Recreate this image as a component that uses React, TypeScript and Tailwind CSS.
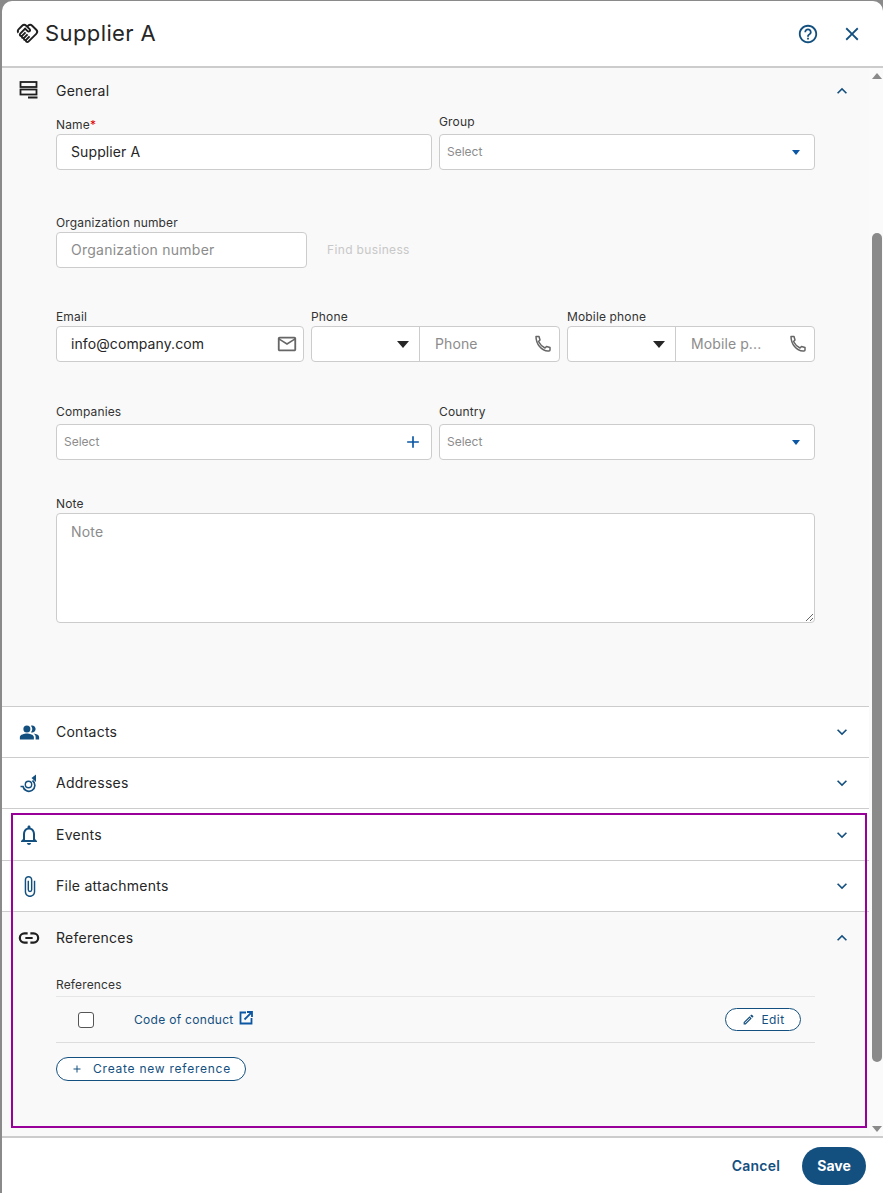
import { MdAdd, MdAttachFile, MdClose, MdExpandLess, MdExpandMore, MdHelpOutline, MdOutlineEdit, MdOutlineEmail, MdOutlineHandshake, MdOutlineNotifications, MdPeopleAlt } from 'react-icons/md'

const labelClass = 'block h-4 text-xs leading-4 tracking-[0.15px] text-[#333]'
const boxClass = 'h-9 rounded border border-[#ccc] bg-white'

function StackIcon() {
  return (
    <svg viewBox="0 0 20 20" className="size-5 text-[#1f1f1f]" fill="none" stroke="currentColor" strokeWidth="1.8">
      <rect x="1.500" y="1" width="16" height="5" />
      <rect x="1.500" y="8.500" width="16" height="5" />
      <path d="M9 16.500h9.500" strokeWidth="2" />
    </svg>
  )
}

function HornIcon() {
  return (
    <svg viewBox="0 0 20 20" className="size-5 text-[#14507f]" fill="none" stroke="currentColor" strokeWidth="1.700">
      <path d="M1.500 13.500H4a6 6 0 1 0 9.500-6" />
      <circle cx="9.500" cy="11.500" r="3.200" strokeWidth="1.400" />
      <path d="M12.500 5 17 1.500V9Z" fill="currentColor" stroke="none" />
    </svg>
  )
}

function PhoneIcon() {
  return (
    <svg viewBox="0 0 20 20" className="size-5 text-[#666]" fill="none" stroke="currentColor" strokeWidth="1.500" strokeLinejoin="round">
      <path d="M3 2.500h3l1 3.500-1.500 1.500c1.500 3 3.500 5 6.500 6.500l1.500-1.500 3.500 1v2.500a1 1 0 0 1-1 1h-1C8.500 17 3 10 3 2.500Z" />
    </svg>
  )
}

function LinkIcon() {
  return (
    <svg viewBox="0 0 24 24" className="-ml-px size-[22px] text-[#1f1f1f]" fill="none" stroke="currentColor" strokeWidth="2.400">
      <path d="M10.500 7H7a5 5 0 0 0 0 10h3.500M13.500 7H17a5 5 0 0 1 0 10h-3.500M8 12h8" />
    </svg>
  )
}

function ExternalIcon() {
  return (
    <svg viewBox="0 0 14 14" className="mb-[3px] ml-[5px] size-[14px] text-[#0b57a4]" fill="none" stroke="currentColor" strokeWidth="1.800">
      <path d="M7 1.500H1.500v11H12.500V7" />
      <path d="M5.500 8.500 12.500 1.500M8 1h5v5" />
    </svg>
  )
}

function SelectField({ label }: { label: string }) {
  return (
    <div className="w-[376px]">
      <label className={`${labelClass} mb-[4px]`}>{label}</label>
      <div className={`${boxClass} flex items-center justify-between pl-[7px] pr-[14px]`}>
        <span className="text-xs text-[#8c8c8c]">Select</span>
        <span className="h-0 w-0 border-x-[4px] border-t-[5px] border-x-transparent border-t-[#0b57a4]" />
      </div>
    </div>
  )
}

function PhoneField({ label, placeholder, width }: { label: string; placeholder: string; width: string }) {
  return (
    <div className={width}>
      <label className={`${labelClass} mb-px`}>{label}</label>
      <div className={`${boxClass} flex items-center`}>
        <div className="flex h-full w-[108px] shrink-0 items-center justify-end border-r border-[#ccc] pr-[10px]">
          <span className="h-0 w-0 border-x-[6px] border-t-[7px] border-x-transparent border-t-[#262626]" />
        </div>
        <span className="ml-[15px] text-sm tracking-[0.1px] text-[#8c8c8c]">{placeholder}</span>
        <span className="ml-auto mr-[6px]"><PhoneIcon /></span>
      </div>
    </div>
  )
}

function Section({ icon, title, open, white, tall }: { icon: React.ReactNode; title: string; open?: boolean; white?: boolean; tall?: boolean }) {
  return (
    <div className={`flex items-center pl-[17px] pr-[17px] ${tall ? 'h-[52px]' : 'h-[51px]'} ${white ? 'border-b border-[#ccc] bg-white' : ''}`}>
      <span className="flex w-[37px] items-center">{icon}</span>
      <span className="text-sm tracking-[0.25px] text-[#262626]">{title}</span>
      <span className="ml-auto text-[#14507f]">{open ? <MdExpandLess size={20} /> : <MdExpandMore size={20} />}</span>
    </div>
  )
}

export default function App() {
  return (
    <div className="relative h-[1193px] w-[883px] overflow-hidden bg-[#8a8a8a] pl-[2px] pt-px font-['Inter',sans-serif]">
      <div className="flex h-full flex-col rounded-t-[10px] bg-white">
        <header className="flex h-[67px] shrink-0 items-center border-b-2 border-[#ccc] pl-[14px] pr-[20px]">
          <MdOutlineHandshake size={23} className="text-[#1f1f1f]" />
          <h1 className="ml-[6px] text-[22px] tracking-[0.4px] text-[#262626]">Supplier A</h1>
          <MdHelpOutline size={22} className="ml-auto text-[#14507f]" />
          <MdClose size={22} className="ml-[22px] text-[#14507f]" />
        </header>

        <div className="flex min-h-0 flex-1">
          <main className="w-[867px] shrink-0 bg-[#f9f9f9]">
            {/* General */}
            <div className="h-[639px] border-b border-[#ccc]">
              <div className="flex h-[46px] items-center pl-[17px] pr-[17px]">
                <span className="flex w-[37px] items-center"><StackIcon /></span>
                <span className="text-sm tracking-[0.25px] text-[#262626]">General</span>
                <span className="ml-auto text-[#14507f]"><MdExpandLess size={20} /></span>
              </div>
              <div className="flex w-[813px] flex-col pl-[54px]">
                <div className="flex items-end gap-[7px]">
                  <div className="w-[376px]">
                    <label className={`${labelClass} mb-px`}>Name<span className="text-[#e00000]">*</span></label>
                    <div className={`${boxClass} flex items-center pl-[14px] text-sm tracking-[0.1px] text-[#262626]`}>Supplier A</div>
                  </div>
                  <SelectField label="Group" />
                </div>

                <div className="mt-[45px]">
                  <label className={`${labelClass} mb-px`}>Organization number</label>
                  <div className="flex items-center">
                    <div className={`${boxClass} flex w-[251px] items-center pl-[14px] text-sm tracking-[0.25px] text-[#8c8c8c]`}>Organization number</div>
                    <span className="ml-5 text-xs tracking-[0.35px] text-[#c8c8c8]">Find business</span>
                  </div>
                </div>

                <div className="mt-[41px] flex gap-[7px]">
                  <div className="w-[248px]">
                    <label className={`${labelClass} mb-px`}>Email</label>
                    <div className={`${boxClass} flex items-center justify-between pl-[14px] pr-[5px] text-sm tracking-[0.1px] text-[#262626]`}>
                      info@company.com
                      <MdOutlineEmail size={22} className="text-[#666]" />
                    </div>
                  </div>
                  <PhoneField label="Phone" placeholder="Phone" width="w-[249px]" />
                  <PhoneField label="Mobile phone" placeholder="Mobile p..." width="w-[248px]" />
                </div>

                <div className="mt-[42px] flex gap-[7px]">
                  <div className="w-[376px]">
                    <label className={`${labelClass} mb-[4px]`}>Companies</label>
                    <div className={`${boxClass} flex items-center justify-between pl-[7px] pr-2`}>
                      <span className="text-xs text-[#8c8c8c]">Select</span>
                      <MdAdd size={20} className="text-[#0b57a4]" />
                    </div>
                  </div>
                  <SelectField label="Country" />
                </div>

                <div className="mt-[36px]">
                  <label className={`${labelClass} mb-px`}>Note</label>
                  <textarea
                    readOnly
                    placeholder="Note"
                    className="block h-[110px] w-full rounded border border-[#ccc] bg-white px-[14px] py-2 text-sm tracking-[0.2px] placeholder:text-[#8c8c8c]"
                  />
                </div>
              </div>
            </div>

            <Section white icon={<MdPeopleAlt size={21} className="text-[#14507f]" />} title="Contacts" />
            <Section white icon={<HornIcon />} title="Addresses" />
            <Section white tall icon={<MdOutlineNotifications size={24} className="-ml-[2px] text-[#14507f]" />} title="Events" />
            <Section white icon={<MdAttachFile size={23} className="-ml-px text-[#14507f]" />} title="File attachments" />
            <Section icon={<LinkIcon />} title="References" open />

            {/* References list */}
            <div className="pl-[54px] pr-[54px] pt-[15px]">
              <div className="h-[19px] border-b border-[#e4e6e8] text-xs leading-[14px] tracking-[0.15px] text-[#333]">References</div>
              <div className="flex h-[46px] items-center border-b border-[#ddd]">
                <span className="ml-[22px] size-4 rounded-[3px] border border-[#555] bg-white" />
                <a className="ml-10 text-xs tracking-[0.3px] text-[#14507f]">Code of conduct</a>
                <ExternalIcon />
                <button className="ml-auto mr-[14px] flex h-[23px] w-[76px] items-center justify-center gap-[7px] rounded-full border border-[#14507f] bg-white text-xs tracking-[0.4px] text-[#14507f]">
                  <MdOutlineEdit size={13} />
                  Edit
                </button>
              </div>
              <button className="mt-[14px] flex h-[24px] w-[190px] items-center justify-center gap-[10px] rounded-full border border-[#14507f] bg-white text-xs tracking-[0.75px] text-[#14507f]">
                <MdAdd size={12} />
                Create new reference
              </button>
            </div>
          </main>

          {/* scrollbar */}
          <div className="flex w-[14px] shrink-0 flex-col items-center bg-[#fafafa] pl-[2px]">
            <span className="mt-[5px] h-0 w-0 border-x-[5px] border-b-[6px] border-x-transparent border-b-[#8a8a8a]" />
            <span className="mt-[154px] h-[829px] w-[10px] rounded-full bg-[#8a8a8a]" />
            <span className="mb-[4px] mt-auto h-0 w-0 border-x-[5px] border-t-[6px] border-x-transparent border-t-[#8a8a8a]" />
          </div>
        </div>

        <footer className="flex h-[57px] shrink-0 items-center justify-end gap-[22px] border-t-2 border-[#ccc] bg-white pr-[17px]">
          <button className="text-sm font-semibold tracking-[0.2px] text-[#14507f]">Cancel</button>
          <button className="h-[38px] w-16 rounded-full bg-[#14507f] text-sm font-bold text-white">Save</button>
        </footer>
      </div>

      {/* highlight rectangle */}
      <div className="absolute left-[11px] top-[813px] h-[315px] w-[856px] border-2 border-[#990099]" />
    </div>
  )
}
